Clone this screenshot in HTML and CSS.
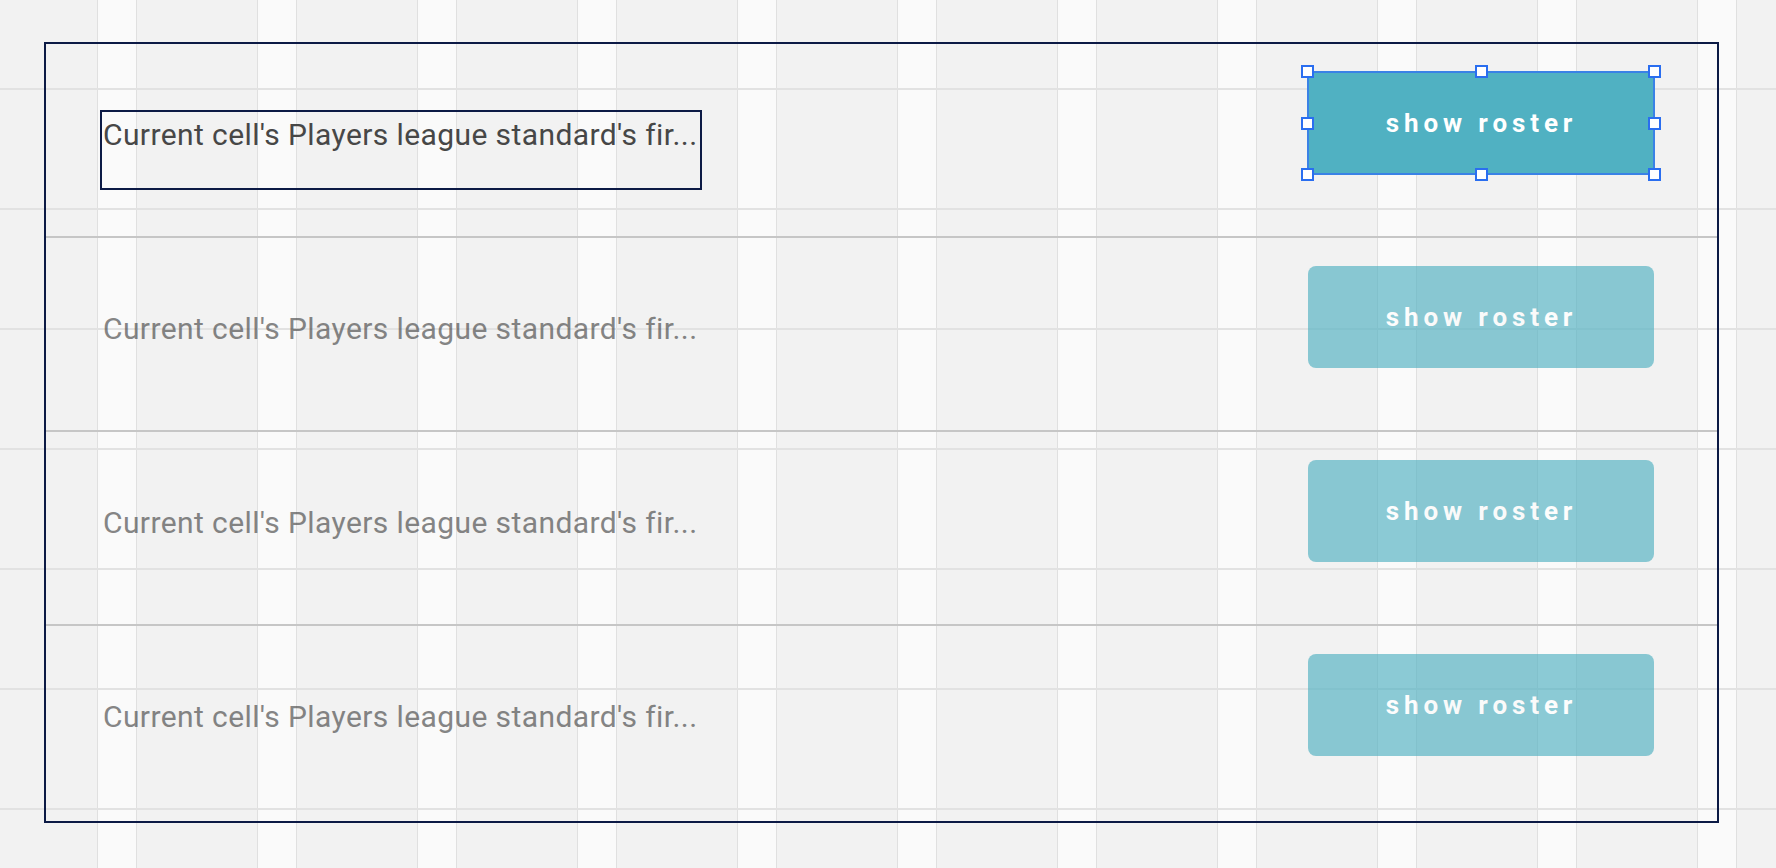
FILE: index.html
```html
<!DOCTYPE html>
<html lang="en">
<head>
<meta charset="utf-8">
<title>Players list</title>
<link rel="stylesheet" href="styles.css">
</head>
<body>
<div class="frame">
  <div class="row selected">
    <div class="cell-text">Current cell's Players league standard's fir...</div>
    <div class="btn-wrap">
      <button class="btn">show roster</button>
      <span class="handle tl"></span><span class="handle tm"></span><span class="handle tr"></span>
      <span class="handle ml"></span><span class="handle mr"></span>
      <span class="handle bl"></span><span class="handle bm"></span><span class="handle br"></span>
    </div>
  </div>
  <div class="row ghost">
    <div class="cell-text">Current cell's Players league standard's fir...</div>
    <div class="btn-wrap"><button class="btn">show roster</button></div>
  </div>
  <div class="row ghost">
    <div class="cell-text">Current cell's Players league standard's fir...</div>
    <div class="btn-wrap"><button class="btn">show roster</button></div>
  </div>
  <div class="row ghost last">
    <div class="cell-text">Current cell's Players league standard's fir...</div>
    <div class="btn-wrap"><button class="btn">show roster</button></div>
  </div>
</div>
</body>
</html>
```
FILE: styles.css
```css
html, body {
  margin: 0;
  height: 100%;
}
body {
  padding: 42px 0 0 44px;
  box-sizing: border-box;
  font-family: Roboto, "Noto Sans", sans-serif;
  background-color: #f2f2f2;
  background-image:
    linear-gradient(to bottom, transparent 0 88px, #e2e2e2 88px 90px, transparent 90px 120px),
    linear-gradient(to right, transparent 0 97px, #e0e0e0 97px 98px, #fafafa 98px 136px, #e0e0e0 136px 137px, transparent 137px 160px);
  background-size: 100% 120px, 160px 100%;
  background-repeat: repeat;
}
.frame {
  width: 1675px;
  height: 781px;
  box-sizing: border-box;
  border: 2px solid #0c1a45;
  display: flex;
  flex-direction: column;
}
.row {
  flex: none;
  height: 194px;
  box-sizing: border-box;
  display: flex;
  justify-content: space-between;
  align-items: flex-start;
  padding: 0 63px 0 54px;
  border-bottom: 2px solid #c6c6c6;
}
.row.last {
  flex: 1;
  border-bottom: none;
}
.cell-text {
  margin-top: 66px;
  width: 602px;
  height: 80px;
  box-sizing: border-box;
  border: 2px solid transparent;
  padding: 3px 0 0 1px;
  font-size: 30px;
  line-height: 40px;
  letter-spacing: 0.4px;
  color: #474747;
  white-space: nowrap;
  overflow: hidden;
}
.selected .cell-text {
  border-color: #0c1a45;
}
.ghost .cell-text,
.ghost .btn {
  opacity: 0.65;
}
.btn-wrap {
  position: relative;
  margin-top: 28px;
}
.btn {
  display: block;
  width: 346px;
  height: 102px;
  border: none;
  border-radius: 8px;
  background: #50b1c2;
  color: #ffffff;
  font-family: Roboto, "Noto Sans", sans-serif;
  font-weight: 700;
  font-size: 26px;
  letter-spacing: 4.9px;
  padding: 0 0 0 1px;
  cursor: pointer;
}
.selected .btn-wrap {
  margin: 27px -1px 0 0;
}
.selected .btn {
  width: 348px;
  height: 104px;
  border-radius: 0;
  outline: 2px solid #3a82e6;
  outline-offset: -2px;
}
.handle {
  position: absolute;
  width: 9px;
  height: 9px;
  background: #ffffff;
  border: 2px solid #2a6ef0;
}
.tl, .tm, .tr { top: -6px; }
.ml, .mr { top: 46px; }
.bl, .bm, .br { bottom: -6px; }
.tl, .ml, .bl { left: -6px; }
.tm, .bm { left: 168px; }
.tr, .mr, .br { right: -6px; }
```
